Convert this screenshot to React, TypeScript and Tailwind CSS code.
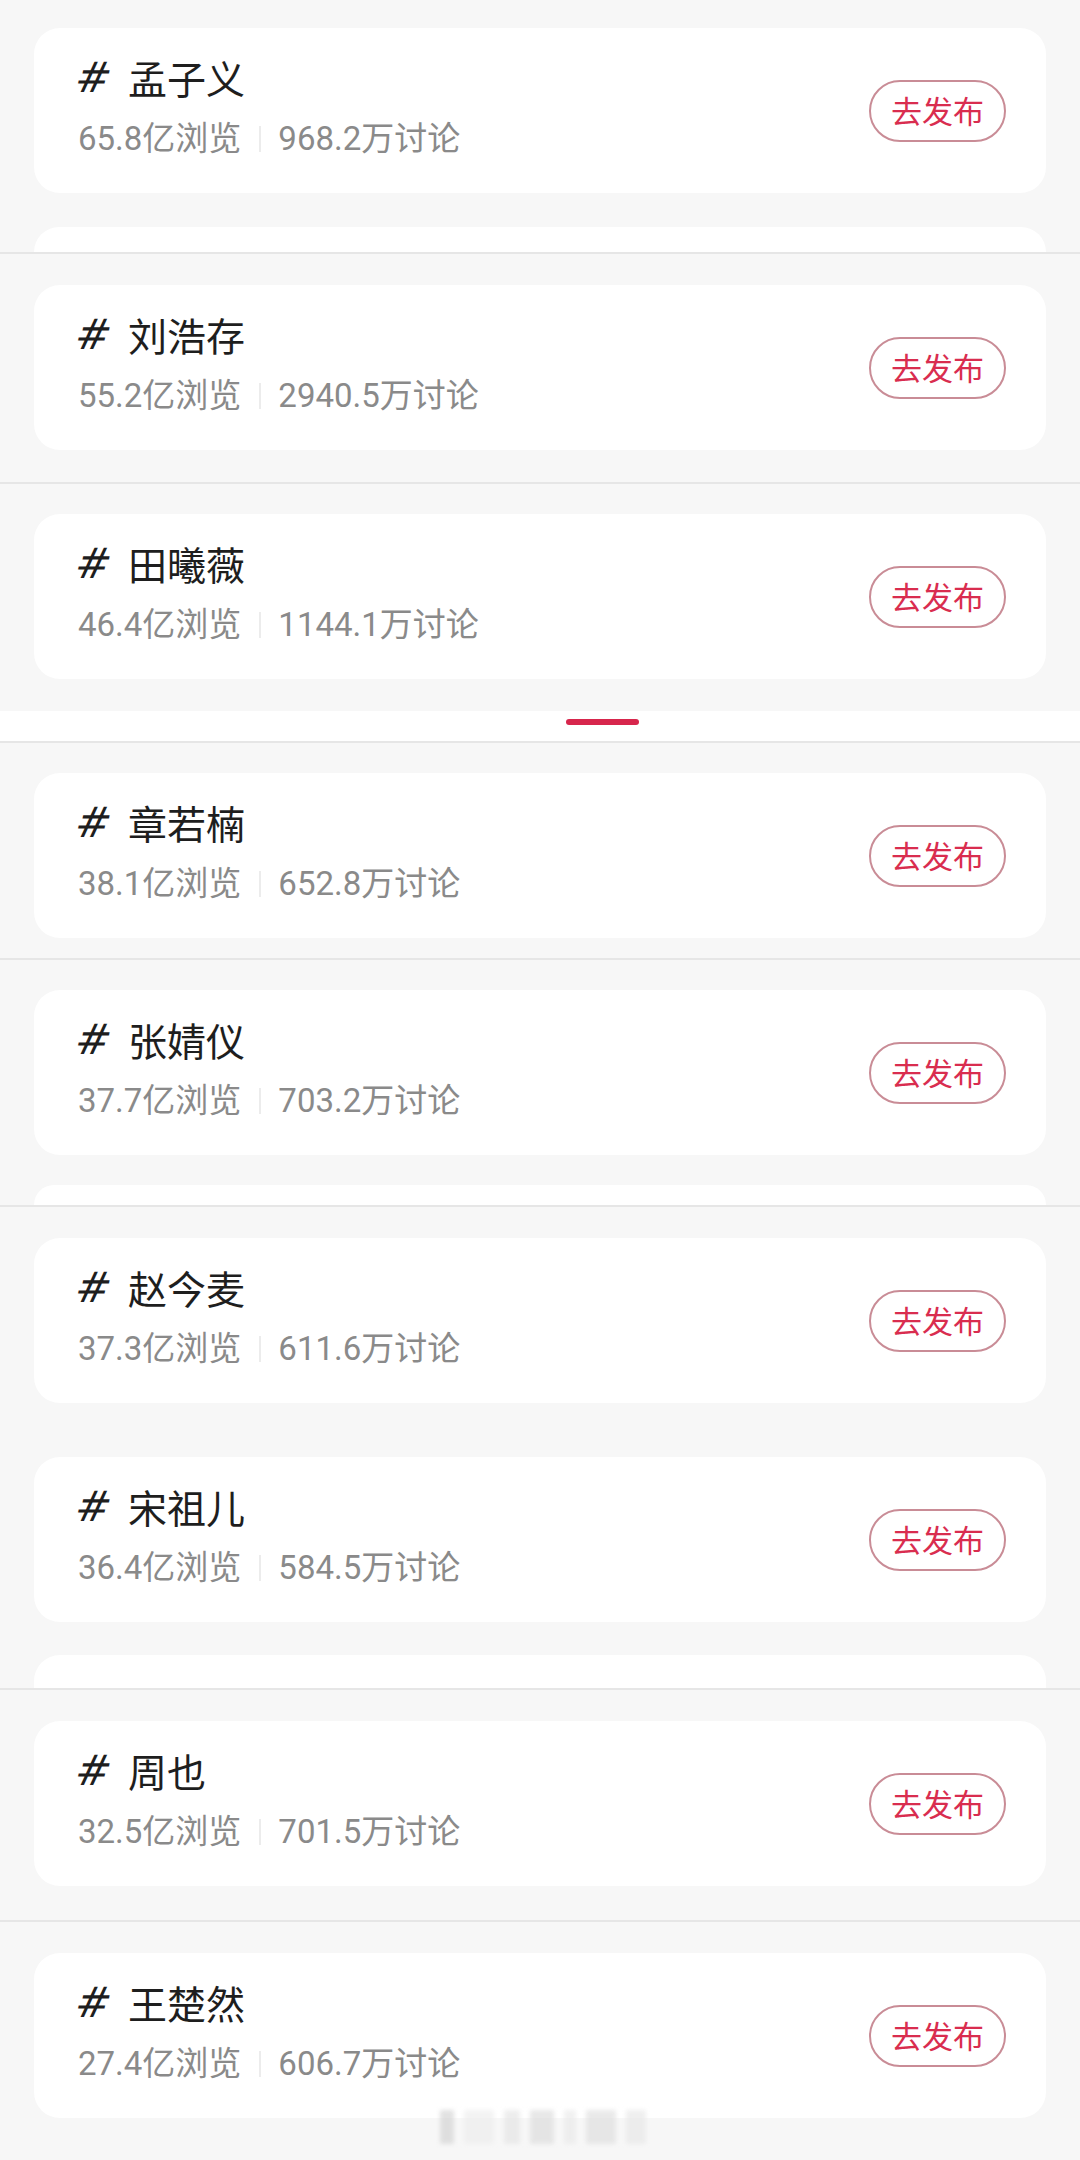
import React from 'react';

type Topic = { name: string; views: string; talks: string };

const topics: Topic[] = [
  { name: '孟子义', views: '65.8亿浏览', talks: '968.2万讨论' },
  { name: '刘浩存', views: '55.2亿浏览', talks: '2940.5万讨论' },
  { name: '田曦薇', views: '46.4亿浏览', talks: '1144.1万讨论' },
  { name: '章若楠', views: '38.1亿浏览', talks: '652.8万讨论' },
  { name: '张婧仪', views: '37.7亿浏览', talks: '703.2万讨论' },
  { name: '赵今麦', views: '37.3亿浏览', talks: '611.6万讨论' },
  { name: '宋祖儿', views: '36.4亿浏览', talks: '584.5万讨论' },
  { name: '周也', views: '32.5亿浏览', talks: '701.5万讨论' },
  { name: '王楚然', views: '27.4亿浏览', talks: '606.7万讨论' },
];

const TopicCard: React.FC<{ topic: Topic }> = ({ topic }) => (
  <div className="mx-[34px] h-[165px] bg-white rounded-[26px] flex items-center justify-between pl-[42px] pr-[40px] shrink-0">
    <div className="flex flex-col -mt-[2px]">
      <div className="flex items-center h-[48px] -mt-[6px] text-[39px] text-[#1e1e1e] font-['Noto_Sans_CJK_SC',sans-serif]">
        <span className="inline-block w-[52px] -skew-x-12 font-['DejaVu_Sans',sans-serif] text-[42px] leading-none">#</span>
        <span>{topic.name}</span>
      </div>
      <div className="flex items-center h-[41px] mt-[17px] ml-[2px] text-[33px] text-[#8a8a8a] font-['Roboto','Noto_Sans_CJK_SC',sans-serif]">
        <span>{topic.views}</span>
        <span className="w-[2px] h-[26px] bg-[#ececec] ml-[18px] mr-[17px]" />
        <span>{topic.talks}</span>
      </div>
    </div>
    <button className="w-[137px] h-[62px] rounded-full border-[2px] border-[#c98c96] flex items-center justify-center text-[31px] text-[#d92d4f] font-['Noto_Sans_CJK_SC',sans-serif]">
      去发布
    </button>
  </div>
);

const Seam = () => <div className="h-[2px] bg-[#e6e6e6] shrink-0" />;

const Strip: React.FC<{ h: string }> = ({ h }) => (
  <div className={`mx-[34px] bg-white rounded-t-[26px] shrink-0 ${h}`} />
);

export default function App() {
  return (
    <div className="w-[1080px] h-[2160px] bg-[#f7f7f7] flex flex-col overflow-hidden">
      <div className="h-[28px] shrink-0" />
      <TopicCard topic={topics[0]} />
      <div className="h-[34px] shrink-0" />
      <Strip h="h-[25px]" />
      <Seam />
      <div className="h-[31px] shrink-0" />
      <TopicCard topic={topics[1]} />
      <div className="h-[32px] shrink-0" />
      <Seam />
      <div className="h-[30px] shrink-0" />
      <TopicCard topic={topics[2]} />
      <div className="h-[32px] shrink-0" />
      <div className="h-[30px] bg-white shrink-0 flex justify-center">
        <div className="mt-[8px] ml-[124px] w-[73px] h-[6px] rounded-full bg-[#d7264c]" />
      </div>
      <Seam />
      <div className="h-[30px] shrink-0" />
      <TopicCard topic={topics[3]} />
      <div className="h-[20px] shrink-0" />
      <Seam />
      <div className="h-[30px] shrink-0" />
      <TopicCard topic={topics[4]} />
      <div className="h-[30px] shrink-0" />
      <Strip h="h-[20px]" />
      <Seam />
      <div className="h-[31px] shrink-0" />
      <TopicCard topic={topics[5]} />
      <div className="h-[54px] shrink-0" />
      <TopicCard topic={topics[6]} />
      <div className="h-[33px] shrink-0" />
      <Strip h="h-[33px]" />
      <Seam />
      <div className="h-[31px] shrink-0" />
      <TopicCard topic={topics[7]} />
      <div className="h-[34px] shrink-0" />
      <Seam />
      <div className="h-[31px] shrink-0" />
      <TopicCard topic={topics[8]} />
      {/* blurred leftovers under the last card */}
      <div className="flex gap-[10px] ml-[440px] -mt-[8px] opacity-60 blur-[2px]">
        <div className="w-[14px] h-[34px] bg-[#cfcfcf]" />
        <div className="w-[30px] h-[34px] bg-[#ececec]" />
        <div className="w-[16px] h-[34px] bg-[#e2e2e2]" />
        <div className="w-[24px] h-[34px] bg-[#d9d9d9]" />
        <div className="w-[12px] h-[34px] bg-[#e8e8e8]" />
        <div className="w-[30px] h-[34px] bg-[#dcdcdc]" />
        <div className="w-[20px] h-[34px] bg-[#e5e5e5]" />
      </div>
    </div>
  );
}
